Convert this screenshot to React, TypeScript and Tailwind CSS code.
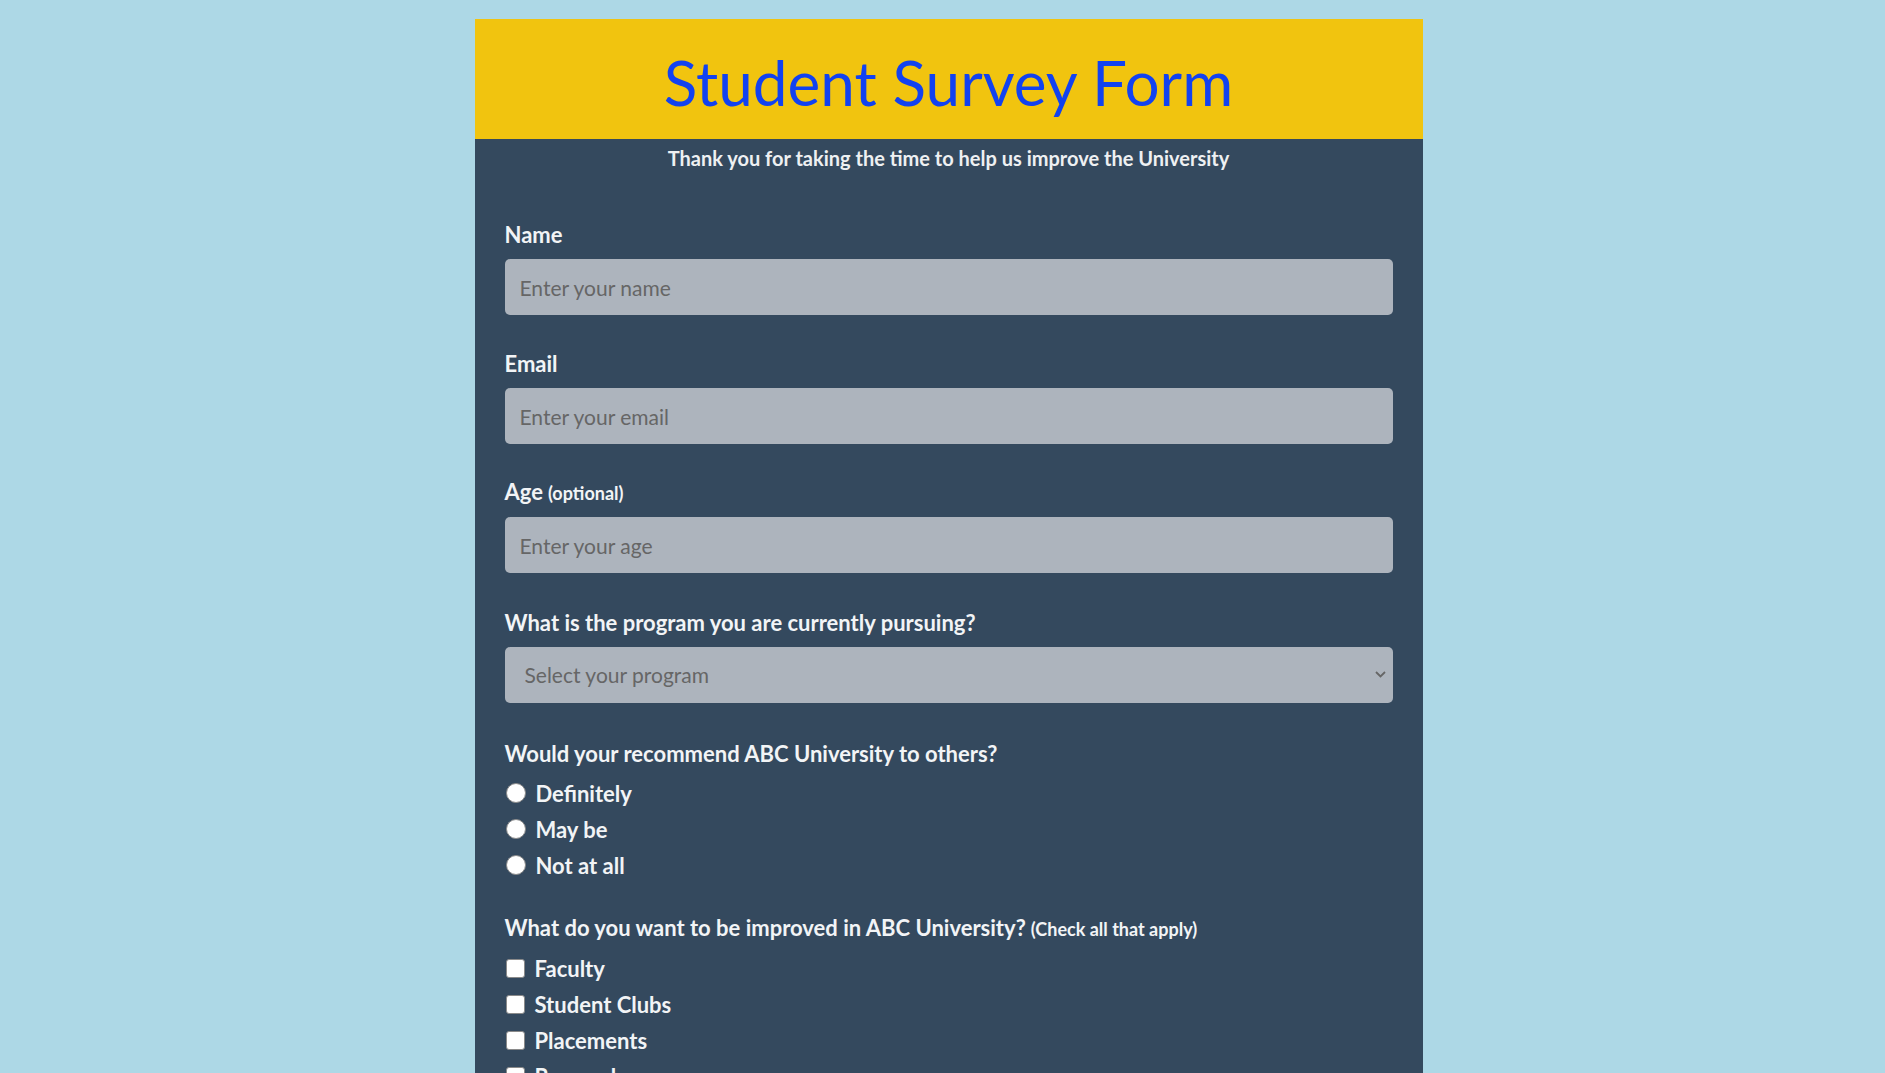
import React from "react";

const font = { fontFamily: "Lato, 'Noto Sans', sans-serif" };

function Field({ label, note, placeholder }: { label: string; note?: string; placeholder: string }) {
  return (
    <div className="flex flex-col">
      <label className="text-[22px] leading-[26px] font-bold text-[#f2f4f6]">
        {label}
        {note && <span className="text-[18px] ml-[5px]">{note}</span>}
      </label>
      <input
        placeholder={placeholder}
        className="mt-[11px] h-[56px] w-full rounded-[5px] bg-[#adb4bd] px-[15px] text-[21px] text-[#333] placeholder:text-[#666] outline-none"
      />
    </div>
  );
}

function Radio({ label }: { label: string }) {
  return (
    <label className="flex h-[36px] items-center gap-[10px] text-[22px] font-bold text-[#f2f4f6]">
      <span className="ml-px h-[20px] w-[20px] rounded-full border border-[#8a8a8a] bg-white" />
      {label}
    </label>
  );
}

function Check({ label }: { label: string }) {
  return (
    <label className="flex h-[36px] items-center gap-[10px] text-[22px] font-bold text-[#f2f4f6]">
      <span className="ml-px h-[19px] w-[19px] rounded-[3px] border border-[#8a8a8a] bg-white" />
      {label}
    </label>
  );
}

export default function App() {
  return (
    <div className="h-screen overflow-y-auto bg-[#add8e6] pl-[12px] pt-[19px] [scrollbar-width:none]" style={font}>
      <div className="mx-auto w-[948px]">
        <header className="flex h-[120px] items-center justify-center bg-[#f1c40f]">
          <h1 className="mt-[6px] text-[62px] leading-none text-[#1242f0]">Student Survey Form</h1>
        </header>
        <main className="bg-[#34495e] px-[30px] pb-[60px] pt-[8px]">
          <p className="text-center text-[20px] leading-[23px] font-bold text-[#eef0f2]">
            Thank you for taking the time to help us improve the University
          </p>
          <form className="mt-[52px] flex flex-col">
            <Field label="Name" placeholder="Enter your name" />
            <div className="mt-[36px]">
              <Field label="Email" placeholder="Enter your email" />
            </div>
            <div className="mt-[35px]">
              <Field label="Age" note="(optional)" placeholder="Enter your age" />
            </div>
            <div className="mt-[37px] flex flex-col">
              <label className="text-[22px] leading-[26px] font-bold text-[#f2f4f6]">
                What is the program you are currently pursuing?
              </label>
              <div className="relative mt-[11px]">
                <select
                  defaultValue=""
                  className="h-[56px] w-full appearance-none rounded-[5px] bg-[#adb4bd] px-[20px] text-[21px] text-[#666] outline-none"
                >
                  <option value="" disabled>
                    Select your program
                  </option>
                  <option>Undergraduate</option>
                  <option>Postgraduate</option>
                  <option>Doctorate</option>
                </select>
                <svg
                  className="pointer-events-none absolute right-[7px] top-[24px]"
                  width="11"
                  height="7"
                  viewBox="0 0 11 7"
                  fill="none"
                >
                  <path d="M1 1l4.5 4.5L10 1" stroke="#666" strokeWidth="1.8" />
                </svg>
              </div>
            </div>
            <div className="mt-[38px] flex flex-col">
              <p className="text-[22px] leading-[26px] font-bold text-[#f2f4f6]">
                Would your recommend ABC University to others?
              </p>
              <div className="mt-[8px] flex flex-col">
                <Radio label="Definitely" />
                <Radio label="May be" />
                <Radio label="Not at all" />
              </div>
            </div>
            <div className="mt-[32px] flex flex-col">
              <p className="text-[22px] leading-[26px] font-bold text-[#f2f4f6]">
                What do you want to be improved in ABC University?
                <span className="ml-[5px] text-[18px]">(Check all that apply)</span>
              </p>
              <div className="mt-[8px] flex flex-col">
                <Check label="Faculty" />
                <Check label="Student Clubs" />
                <Check label="Placements" />
                <Check label="Research" />
                <Check label="Infrastructure" />
              </div>
            </div>
            <div className="mt-[36px] flex flex-col">
              <label className="text-[22px] leading-[26px] font-bold text-[#f2f4f6]">Any comments or suggestions?</label>
              <textarea
                placeholder="Enter your comments here..."
                className="mt-[11px] h-[140px] w-full rounded-[5px] bg-[#adb4bd] px-[15px] py-[12px] text-[21px] placeholder:text-[#666] outline-none"
              />
            </div>
            <button className="mt-[30px] h-[56px] w-full rounded-[5px] bg-[#f1c40f] text-[22px] font-bold text-[#34495e]">
              Submit
            </button>
          </form>
        </main>
      </div>
    </div>
  );
}
